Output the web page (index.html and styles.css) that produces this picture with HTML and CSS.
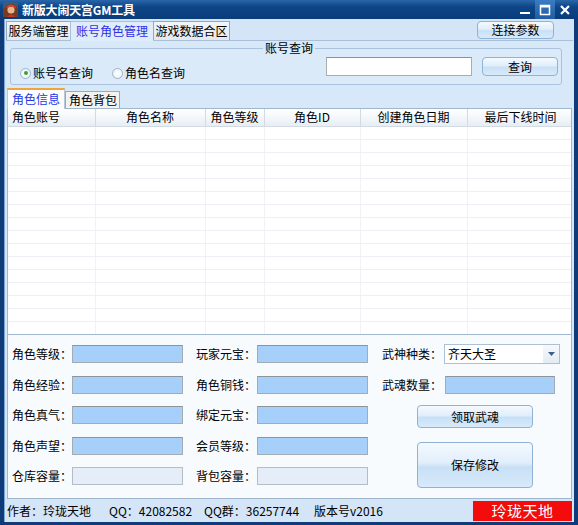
FILE: index.html
```html
<!DOCTYPE html>
<html lang="zh-CN">
<head>
  <meta charset="UTF-8">
  <title>新版大闹天宫GM工具</title>
  <link rel="stylesheet" href="styles.css">
</head>
<body>
<div class="window">
  <div class="titlebar">
    <svg class="app-icon" width="15" height="15" viewBox="0 0 15 15">
      <rect width="15" height="15" fill="#3a5a86"/>
      <path d="M0 15 L0 8 Q3 2 8 2 Q13 2 15 7 L15 15 Z" fill="#7a3a22"/>
      <circle cx="8" cy="8" r="3.6" fill="#e9b48a"/>
      <path d="M3 5 Q8 0 13 5 L12 6 Q8 3 4 6 Z" fill="#d8452a"/>
      <path d="M4 15 Q8 10 12 15 Z" fill="#c0392b"/>
    </svg>
    <span class="title">新版大闹天宫GM工具</span>
    <div class="caption-btns">
      <span class="cap-btn">
        <svg width="12" height="12" viewBox="0 0 12 12"><rect x="1" y="8" width="10" height="2" fill="#fff"/></svg>
      </span>
      <span class="cap-btn hover">
        <svg width="12" height="12" viewBox="0 0 12 12"><path d="M1.5 1.5 H10.5 V10.5 H1.5 Z" fill="none" stroke="#fff" stroke-width="1.5"/><rect x="1" y="1" width="10" height="2.5" fill="#fff"/></svg>
      </span>
      <span class="cap-btn">
        <svg width="12" height="12" viewBox="0 0 12 12"><path d="M2 2 L10 10 M10 2 L2 10" stroke="#fff" stroke-width="2.2"/></svg>
      </span>
    </div>
  </div>

  <div class="client">
    <div class="tabs-row">
      <div class="tab tab-server">服务端管理</div>
      <div class="tab tab-account active">账号角色管理</div>
      <div class="tab tab-merge">游戏数据合区</div>
      <button class="btn btn-connect">连接参数</button>
    </div>

    <div class="tab-panel">
      <fieldset class="query-box">
        <legend>账号查询</legend>
        <div class="radios">
          <label class="radio checked"><span class="dot"></span>账号名查询</label>
          <label class="radio"><span class="dot"></span>角色名查询</label>
        </div>
        <div class="search">
          <input class="search-input" type="text">
          <button class="btn btn-query">查询</button>
        </div>
      </fieldset>

      <div class="sub-tabs">
        <div class="sub-tab active">角色信息</div>
        <div class="sub-tab">角色背包</div>
      </div>

      <div class="sub-panel">
        <div class="list">
          <table class="grid">
            <thead>
              <tr>
                <th class="c1 left">角色账号</th>
                <th class="c2">角色名称</th>
                <th class="c3">角色等级</th>
                <th class="c4">角色ID</th>
                <th class="c5">创建角色日期</th>
                <th class="c6">最后下线时间</th>
              </tr>
            </thead>
            <tbody>
              <tr><td></td><td></td><td></td><td></td><td></td><td></td></tr>
              <tr><td></td><td></td><td></td><td></td><td></td><td></td></tr>
              <tr><td></td><td></td><td></td><td></td><td></td><td></td></tr>
              <tr><td></td><td></td><td></td><td></td><td></td><td></td></tr>
              <tr><td></td><td></td><td></td><td></td><td></td><td></td></tr>
              <tr><td></td><td></td><td></td><td></td><td></td><td></td></tr>
              <tr><td></td><td></td><td></td><td></td><td></td><td></td></tr>
              <tr><td></td><td></td><td></td><td></td><td></td><td></td></tr>
              <tr><td></td><td></td><td></td><td></td><td></td><td></td></tr>
              <tr><td></td><td></td><td></td><td></td><td></td><td></td></tr>
              <tr><td></td><td></td><td></td><td></td><td></td><td></td></tr>
              <tr><td></td><td></td><td></td><td></td><td></td><td></td></tr>
              <tr><td></td><td></td><td></td><td></td><td></td><td></td></tr>
              <tr><td></td><td></td><td></td><td></td><td></td><td></td></tr>
              <tr><td></td><td></td><td></td><td></td><td></td><td></td></tr>
              <tr><td></td><td></td><td></td><td></td><td></td><td></td></tr>
            </tbody>
          </table>
        </div>

        <div class="form">
          <div class="col col-a">
            <div class="field"><label>角色等级：</label><input class="box"></div>
            <div class="field"><label>角色经验：</label><input class="box"></div>
            <div class="field"><label>角色真气：</label><input class="box"></div>
            <div class="field"><label>角色声望：</label><input class="box"></div>
            <div class="field"><label>仓库容量：</label><input class="box disabled" disabled></div>
          </div>
          <div class="col col-b">
            <div class="field"><label>玩家元宝：</label><input class="box"></div>
            <div class="field"><label>角色铜钱：</label><input class="box"></div>
            <div class="field"><label>绑定元宝：</label><input class="box"></div>
            <div class="field"><label>会员等级：</label><input class="box"></div>
            <div class="field"><label>背包容量：</label><input class="box disabled" disabled></div>
          </div>
          <div class="col col-c">
            <div class="field combo-field">
              <label>武神种类：</label>
              <div class="combo">
                <span class="combo-text">齐天大圣</span>
                <span class="combo-arrow">
                  <svg width="7" height="4" viewBox="0 0 7 4"><path d="M0 0 H7 L3.5 4 Z" fill="#3d5f86"/></svg>
                </span>
              </div>
            </div>
            <div class="field soul-field"><label>武魂数量：</label><input class="box"></div>
            <button class="btn btn-soul">领取武魂</button>
            <button class="btn btn-save">保存修改</button>
          </div>
        </div>
      </div>
    </div>

    <div class="statusbar">
      <span class="st-author">作者：玲珑天地</span>
      <span class="st-qq">QQ：42082582</span>
      <span class="st-group">QQ群：36257744</span>
      <span class="st-ver">版本号v2016</span>
      <span class="st-brand">玲珑天地</span>
    </div>
  </div>
</div>
</body>
</html>
```

FILE: styles.css
```css
* {
  box-sizing: border-box;
}
body {
  margin: 0;
  font-family: "Noto Sans CJK SC", "Noto Sans", sans-serif;
  font-size: 12px;
  line-height: 14px;
  color: #000;
  background: #fff;
}
.window {
  width: 578px;
  height: 525px;
  background: #0f3c78;
  display: flex;
  flex-direction: column;
}

/* title bar */
.titlebar {
  height: 19px;
  display: flex;
  align-items: center;
  padding-left: 3px;
  background: linear-gradient(#2a66aa, #0e4687 35%, #0b3c7b);
  color: #fff;
}
.app-icon {
  display: block;
  margin-right: 4px;
}
.title {
  font-weight: bold;
  font-size: 12px;
  letter-spacing: -0.2px;
}
.caption-btns {
  margin-left: auto;
  margin-right: 3px;
  display: flex;
  height: 19px;
}
.cap-btn {
  width: 20px;
  height: 19px;
  display: flex;
  align-items: center;
  justify-content: center;
}
.cap-btn.hover {
  background: linear-gradient(#3a7cc4, #1f5ca4);
}

/* client area */
.client {
  flex: 1;
  margin: 0 4px 3px 4px;
  padding: 2px 1px 0 1px;
  background: #d4e5f7;
  border-left: 1px solid #7ea6d3;
  display: flex;
  flex-direction: column;
}
.tabs-row {
  height: 19px;
  display: flex;
  align-items: flex-end;
  position: relative;
  z-index: 1;
}
.tab {
  height: 19px;
  border: 1px solid #9aa8b8;
  border-bottom: none;
  background: linear-gradient(#f2f5f8, #e2e8ef);
  text-align: center;
  padding-top: 2px;
  margin-right: -1px;
}
.tab-server { width: 65px; }
.tab-account { width: 84px; }
.tab-merge { width: 77px; }
.tab.active {
  height: 20px;
  margin-bottom: -1px;
  background: #dfecfa;
  color: #2f2fe6;
  border-color: #a9c0d8;
}

.btn {
  font-family: inherit;
  font-size: 12px;
  color: #000;
  border: 1px solid #8fb2d5;
  border-radius: 4px;
  background: linear-gradient(#f4f9ff, #e1eefb 45%, #c8e0f6 55%, #d8eafb);
  padding: 0;
  line-height: 14px;
}
.btn-connect {
  width: 77px;
  height: 18px;
  margin-left: auto;
  margin-right: 19px;
  margin-bottom: 1px;
}

.tab-panel {
  height: 459px;
  border-top: 1px solid #a9c0d8;
  background: #d7e8f9;
}

/* query group */
.query-box {
  height: 44px;
  margin: 0 11px 0 4px;
  padding: 2px 3px 0 9px;
  border: 1px solid #a9c3de;
  border-radius: 3px;
  display: flex;
  justify-content: space-between;
  background: #dbeaf9;
}
.query-box legend {
  margin: 0 auto;
  padding: 0 2px;
  line-height: 14px;
}
.radios {
  display: flex;
  padding-top: 5px;
}
.radio {
  display: flex;
  align-items: center;
  margin-right: 19px;
}
.dot {
  width: 11px;
  height: 11px;
  border: 1px solid #9fb2c6;
  border-radius: 50%;
  background: radial-gradient(#ffffff, #e6eef6);
  margin-right: 2px;
  display: flex;
  align-items: center;
  justify-content: center;
}
.radio.checked .dot::after {
  content: "";
  width: 4px;
  height: 4px;
  border-radius: 50%;
  background: #38a532;
}
.search {
  display: flex;
}
.search-input {
  width: 146px;
  height: 19px;
  border: 1px solid #a9acb0;
  border-top-color: #8c9096;
  background: #fff;
  margin-right: 10px;
}
.btn-query {
  width: 76px;
  height: 19px;
}

/* inner tabs */
.sub-tabs {
  display: flex;
  align-items: flex-end;
  margin-top: 3px;
  height: 20px;
  padding-left: 1px;
  position: relative;
  z-index: 1;
}
.sub-tab {
  height: 17px;
  width: 55px;
  border: 1px solid #a7a7a7;
  border-bottom: none;
  background: #f2f2f2;
  padding: 1px 0 0 3px;
}
.sub-tab.active {
  width: 58px;
  height: 21px;
  margin-bottom: -1px;
  border-color: #b9c8d8;
  border-top: 2px solid #f1a43b;
  background: #fcfdff;
  color: #2438e6;
  padding: 2px 0 0 4px;
}

.sub-panel {
  height: 391px;
  margin-left: 1px;
  margin-right: 1px;
  border: 1px solid #9fb6cd;
  background: #f8fbfe;
}

/* list view */
.list {
  height: 226px;
  background: #fff;
  border-bottom: 1px solid #9fb6cd;
  overflow: hidden;
}
.grid {
  border-collapse: collapse;
  table-layout: fixed;
  width: 566px;
}
.grid th {
  height: 17px;
  padding: 0;
  font-weight: normal;
  text-align: center;
  background: linear-gradient(#ffffff, #f1f5f9 60%, #e7edf3);
  border-right: 1px solid #d2dbe4;
  border-bottom: 1px solid #d2dbe4;
}
.grid th.left {
  text-align: left;
  padding-left: 4px;
}
.grid .c1 { width: 87px; }
.grid .c2 { width: 110px; }
.grid .c3 { width: 59px; }
.grid .c4 { width: 96px; }
.grid .c5 { width: 107px; }
.grid .c6 { width: 107px; }
.grid td {
  height: 13px;
  padding: 0;
  border-right: 1px solid #f0f2f5;
  border-bottom: 1px solid #eceff3;
}

/* edit form */
.form {
  display: flex;
  padding: 10px 0 0 4px;
}
.col {
  display: flex;
  flex-direction: column;
  gap: 12.5px;
}
.col-a { width: 184px; }
.col-b { width: 186px; }
.field {
  display: flex;
  align-items: center;
  height: 18px;
}
.col-a label { width: 60px; }
.col-b label { width: 61px; }
.col-c label { width: 62px; }
.box {
  width: 111px;
  height: 18px;
  border: 1px solid #a3abb3;
  border-top-color: #8d949b;
  background: #a6d0f9;
  font-family: inherit;
}
.box.disabled {
  background: #e5eef8;
  border-color: #b4bcc5;
}
.col-c {
  gap: 0;
}
.combo-field {
  height: 20px;
  margin-top: -1px;
}
.combo {
  width: 116px;
  height: 20px;
  border: 1px solid #adc0d4;
  background: #fff;
  display: flex;
  align-items: center;
}
.combo-text {
  flex: 1;
  padding-left: 3px;
}
.combo-arrow {
  width: 16px;
  height: 18px;
  display: flex;
  align-items: center;
  justify-content: center;
  background: linear-gradient(#f6f9fc, #e3ebf3);
}
.soul-field {
  margin-top: 12px;
}
.soul-field .box {
  width: 110px;
  margin-left: 1px;
}
.btn-soul {
  width: 116px;
  height: 23px;
  margin: 11px 0 0 35px;
}
.btn-save {
  width: 116px;
  height: 46px;
  margin: 14px 0 0 35px;
}

/* status bar */
.statusbar {
  height: 23px;
  display: flex;
  align-items: center;
  padding-left: 1px;
}
.st-author { width: 102px; }
.st-qq { width: 95px; }
.st-group { width: 110px; }
.st-brand {
  margin-left: auto;
  margin-right: 1px;
  width: 99px;
  height: 20px;
  background: #f40b0b;
  color: #fff;
  font-size: 15px;
  line-height: 20px;
  text-align: center;
  letter-spacing: 0.5px;
}
```
